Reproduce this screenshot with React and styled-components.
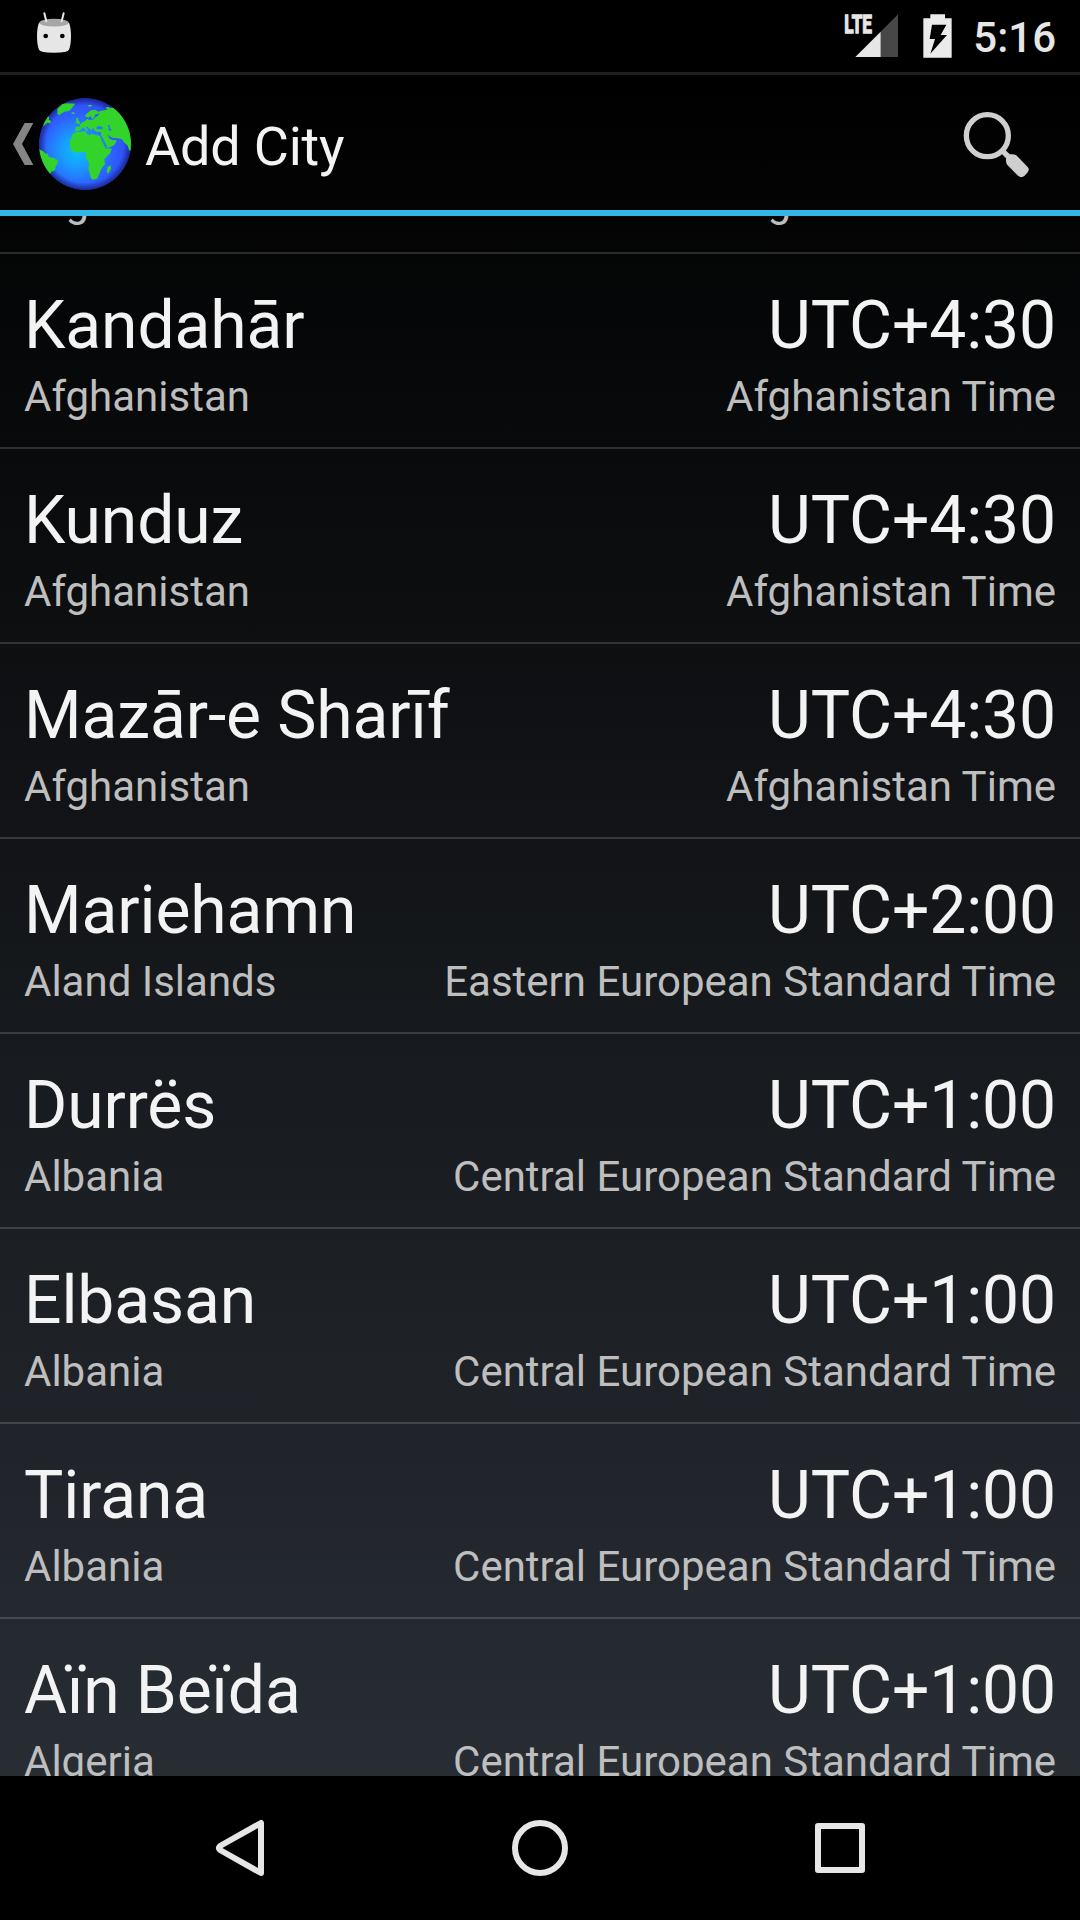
import React from "react";
import styled, { createGlobalStyle } from "styled-components";

const GlobalStyle = createGlobalStyle`
  html, body { margin: 0; padding: 0; background: #000; }
  *, *::before, *::after { box-sizing: border-box; }
`;

const Screen = styled.div`
  display: flex;
  flex-direction: column;
  width: 1080px;
  height: 1920px;
  overflow: hidden;
  background: #000;
  font-family: Roboto, "Noto Sans", sans-serif;
  color: #f3f3f3;
`;

const StatusBar = styled.header`
  display: flex;
  flex: none;
  align-items: flex-start;
  justify-content: space-between;
  height: 72px;
  padding: 12px 24px 0 36px;
`;

const StatusIcons = styled.div`
  display: flex;
  align-items: flex-start;
  padding-top: 2px;
`;

const SignalIcon = styled.svg`
  width: 54px;
  height: 44px;
  margin-right: 24px;
  overflow: visible;
`;

const BatteryIcon = styled.svg`
  width: 29px;
  height: 44px;
  margin-right: 21px;
`;

const Clock = styled.span`
  font-size: 42px;
  font-weight: 500;
  line-height: 48px;
  color: #e6e6e6;
`;

const Window = styled.main`
  display: flex;
  flex: none;
  flex-direction: column;
  height: 1704px;
  overflow: hidden;
  background: linear-gradient(#000000, #282d34);
`;

const ActionBar = styled.div`
  display: flex;
  flex: none;
  align-items: center;
  height: 144px;
  padding: 3px 50px 0 13px;
  border-top: 3px solid #1f1f1f;
  border-bottom: 6px solid #33b5e5;
`;

const UpButton = styled.div`
  display: flex;
  align-items: center;
  gap: 5px;
`;

const Chevron = styled.svg`
  width: 21px;
  height: 42px;
`;

const Globe = styled.svg`
  width: 92px;
  height: 92px;
`;

const Title = styled.h1`
  flex: 1;
  margin: 0;
  padding: 6px 0 0 14px;
  font-size: 54px;
  font-weight: 400;
  line-height: 64px;
  letter-spacing: -0.2px;
`;

const SearchIcon = styled.svg`
  width: 67px;
  height: 67px;
`;

const ListViewport = styled.div`
  display: flex;
  flex: 1;
  flex-direction: column;
  justify-content: flex-start;
  min-height: 0;
  overflow: hidden;
`;

const CityList = styled.ul`
  flex: none;
  margin: -157px 0 0;
  padding: 0;
  list-style: none;
`;

const CityRow = styled.li`
  display: flex;
  flex-direction: column;
  height: 195px;
  padding: 33px 24px 0;
  border-bottom: 2px solid rgba(255, 255, 255, 0.155);
`;

const Line = styled.div`
  display: flex;
  justify-content: space-between;
  white-space: nowrap;
`;

const PrimaryLine = styled(Line)`
  height: 85px;
  font-size: 66px;
  line-height: 78px;
  letter-spacing: -0.12px;
`;

const SecondaryLine = styled(Line)`
  font-size: 42px;
  line-height: 50px;
  color: #bebebe;
`;

const NavBar = styled.nav`
  display: grid;
  flex: none;
  grid-template-columns: repeat(3, 300px);
  align-items: center;
  justify-content: center;
  justify-items: center;
  height: 144px;
  background: #000;
`;

const NavIcon = styled.svg`
  width: 60px;
  height: 60px;
  fill: none;
  stroke: #e6e6e6;
  stroke-width: 6;
  stroke-linejoin: round;
`;

const AFT = "Afghanistan Time";
const EET = "Eastern European Standard Time";
const CET = "Central European Standard Time";

const cities = [
  { name: "", country: "Afghanistan", offset: "", zone: AFT },
  { name: "Kandahār", country: "Afghanistan", offset: "UTC+4:30", zone: AFT },
  { name: "Kunduz", country: "Afghanistan", offset: "UTC+4:30", zone: AFT },
  { name: "Mazār-e Sharīf", country: "Afghanistan", offset: "UTC+4:30", zone: AFT },
  { name: "Mariehamn", country: "Aland Islands", offset: "UTC+2:00", zone: EET },
  { name: "Durrës", country: "Albania", offset: "UTC+1:00", zone: CET },
  { name: "Elbasan", country: "Albania", offset: "UTC+1:00", zone: CET },
  { name: "Tirana", country: "Albania", offset: "UTC+1:00", zone: CET },
  { name: "Aïn Beïda", country: "Algeria", offset: "UTC+1:00", zone: CET },
];

const MarshmallowIcon = styled.svg`
  width: 36px;
  height: 42px;
`;

function Marshmallow() {
  return (
    <MarshmallowIcon viewBox="108 36 108 126">
      <path d="M117 68 Q111 82 111 108 Q111 134 117 149 Q120 158 162 158 Q204 158 207 149 Q213 134 213 108 Q213 82 207 68 Z" fill="#e6e6e6" />
      <ellipse cx="162" cy="68" rx="44" ry="11.5" fill="#a6a6a6" />
      <path d="M133 40 L139 64 M191 40 L185 64" stroke="#e6e6e6" strokeWidth="6" strokeLinecap="round" />
      <circle cx="137" cy="108" r="7" fill="#000" />
      <circle cx="187" cy="108" r="7" fill="#000" />
    </MarshmallowIcon>
  );
}

function Signal() {
  return (
    <SignalIcon viewBox="75 42 162 132">
      <path d="M182 95 L234 43 V171 H182 Z" fill="#474747" />
      <path d="M106 171 L182 95 V171 Z" fill="#e6e6e6" />
      <text x="73" y="100" fontSize="77" fontWeight="700" fill="#e6e6e6" stroke="#e6e6e6" strokeWidth="4" textLength="83" lengthAdjust="spacingAndGlyphs">LTE</text>
    </SignalIcon>
  );
}

function Battery() {
  return (
    <BatteryIcon viewBox="309 42 87 132">
      <path fillRule="evenodd" fill="#ebebeb" d="M331 43 H375 V55 H395 V173 H310 V55 H331 Z M336 74 L329 117 H345 L331 161 L381 105 H362 L379 74 Z" />
    </BatteryIcon>
  );
}

function GlobeIcon() {
  return (
    <Globe viewBox="117 53 276 276">
      <defs>
        <radialGradient id="ocean" cx="232" cy="212" r="172" gradientUnits="userSpaceOnUse">
          <stop offset="0" stopColor="#08c0ff" />
          <stop offset="0.3" stopColor="#1a98ff" />
          <stop offset="0.62" stopColor="#2e60ff" />
          <stop offset="1" stopColor="#3046f0" />
        </radialGradient>
        <radialGradient id="rim" cx="255" cy="191" r="138" gradientUnits="userSpaceOnUse">
          <stop offset="0.84" stopColor="#101060" stopOpacity="0" />
          <stop offset="1" stopColor="#101060" stopOpacity="0.65" />
        </radialGradient>
        <clipPath id="disc"><circle cx="255" cy="191" r="138" /></clipPath>
      </defs>
      <g clipPath="url(#disc)">
        <circle cx="255" cy="191" r="138" fill="url(#ocean)" />
        <circle cx="255" cy="191" r="138" fill="url(#rim)" />
        <g fill="#32d42b">
          <path d="M172 86 L186 72 L200 69 L226 70 L214 85 L207 92 L193 94 L178 104 L172 101 Z" />
          <path d="M213 98 L220 95 L226 99 L219 102 Z" />
          <path d="M262 76 L270 73 L278 75 L269 80 Z" />
          <path d="M130 123 L137 115 L143 107 L148 111 L146 118 L153 121 L151 129 L143 127 L137 132 L130 138 Z" />
          <path d="M117 207 L129 212 L135 219 L144 222 L146 229 L161 233 L174 240 L172 251 L167 257 L165 270 L154 274 L150 282 L141 279 L117 250 Z" />
          <path d="M228 115 L234 111 L235 118 L241 128 L235 132 L230 127 Z M226 123 L230 125 L227 130 Z" />
          <path d="M226 139 L239 139 L239 134 L247 126 L255 122 L263 115 L266 119 L279 118 L287 110 L294 106 L299 99 L293 101 L286 102 L282 112 L276 116 L271 107 L265 112 L254 107 L263 97 L273 90 L285 88 L295 94 L304 91 L317 89 L324 87 L316 84 L322 79 L330 82 L342 83 L365 97 L395 150 L397 210 L388 211 L382 195 L374 188 L365 176 L349 173 L340 173 L329 168 L323 161 L327 174 L336 179 L349 180 L349 185 L342 195 L323 203 L317 199 L309 184 L302 168 L304 158 L302 155 L289 154 L282 148 L278 143 L275 151 L270 147 L263 139 L257 139 L264 149 L262 153 L250 141 L244 146 L236 153 L226 152 Z" />
          <path d="M217 163 L228 155 L241 155 L257 152 L260 160 L269 165 L275 160 L288 164 L300 166 L306 184 L317 204 L335 205 L331 218 L313 236 L315 252 L305 264 L298 280 L291 295 L279 298 L273 294 L265 265 L267 248 L258 235 L258 218 L248 214 L225 217 L211 205 L209 186 Z" />
          <path d="M332 254 L333 266 L325 280 L320 274 L322 261 Z" />
        </g>
        <g fill="#2379ff">
          <path d="M289 141 L296 136 L305 139 L311 143 L304 147 L290 147 Z" />
          <path d="M323 136 L329 133 L330 143 L335 148 L331 153 L325 149 L327 143 Z" />
          <path d="M301 166 L305 166 L322 199 L319 203 Z" />
        </g>
      </g>
    </Globe>
  );
}

export default function App() {
  return (
    <Screen>
      <GlobalStyle />
      <StatusBar>
        <Marshmallow />
        <StatusIcons>
          <Signal />
          <Battery />
          <Clock>5:16</Clock>
        </StatusIcons>
      </StatusBar>
      <Window>
        <ActionBar>
          <UpButton>
            <Chevron viewBox="39 129 63 126">
              <path d="M39 192 L74 129 H100 L66 192 L100 255 H74 Z" fill="#858585" />
            </Chevron>
            <GlobeIcon />
          </UpButton>
          <Title>Add City</Title>
          <SearchIcon viewBox="428 330 201 201">
            <circle cx="501" cy="404" r="63" fill="none" stroke="#cfcfcf" strokeWidth="16" />
            <path d="M545 448 L568 471" stroke="#cfcfcf" strokeWidth="16" />
            <path d="M557 474 L570 460 Q580 458 588 463 L622 498 Q629 506 621 515 L612 525 Q603 532 594 525 L561 492 Q556 485 557 474 Z" fill="#cfcfcf" />
          </SearchIcon>
        </ActionBar>
        <ListViewport>
          <CityList>
            {cities.map((city) => (
              <CityRow key={city.name}>
                <PrimaryLine>
                  <span>{city.name}</span>
                  <span>{city.offset}</span>
                </PrimaryLine>
                <SecondaryLine>
                  <span>{city.country}</span>
                  <span>{city.zone}</span>
                </SecondaryLine>
              </CityRow>
            ))}
          </CityList>
        </ListViewport>
      </Window>
      <NavBar>
        <NavIcon viewBox="210 1818 60 60">
          <path d="M261 1823 V1873 L220 1850 Q218 1848 220 1846 Z" />
        </NavIcon>
        <NavIcon viewBox="510 1818 60 60">
          <circle cx="540" cy="1848" r="25" />
        </NavIcon>
        <NavIcon viewBox="810 1818 60 60">
          <rect x="818" y="1826" width="44" height="44" />
        </NavIcon>
      </NavBar>
    </Screen>
  );
}
